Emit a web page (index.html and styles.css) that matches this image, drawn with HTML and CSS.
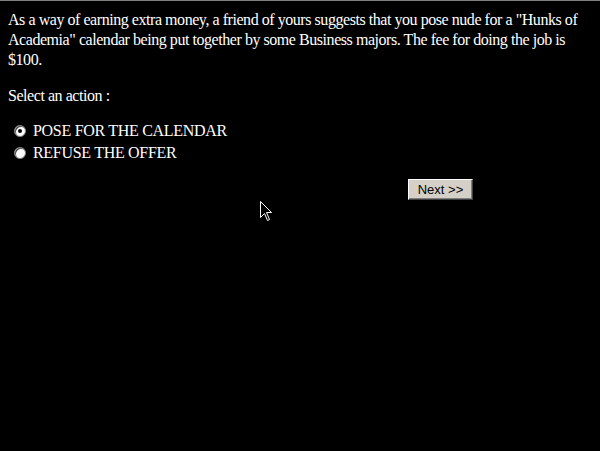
FILE: index.html
```html
<!DOCTYPE html>
<html>
<head>
<meta charset="utf-8">
<link rel="stylesheet" href="styles.css">
</head>
<body>
<div class="page">
  <p class="intro">As a way of earning extra money, a friend of yours suggests that you pose nude for a "Hunks of<br>Academia" calendar being put together by some Business majors. The fee for doing the job is<br>$100.</p>
  <p class="prompt">Select an action :</p>
  <form class="choices">
    <label class="choice"><input type="radio" name="act" class="radio" checked><span>POSE FOR THE CALENDAR</span></label>
    <label class="choice"><input type="radio" name="act" class="radio"><span>REFUSE THE OFFER</span></label>
    <div class="actions"><button type="button" class="next">Next &gt;&gt;</button></div>
  </form>
</div>
<svg class="cursor" width="12" height="20" viewBox="0 0 12 20"><path d="M0.5 0.5 L0.5 16.5 L4.5 12.5 L7.5 19.5 L9.5 18.5 L6.5 11.5 L11.5 11.5 Z" fill="#000" stroke="#fff" stroke-width="1"/></svg>
</body>
</html>
```
FILE: styles.css
```css
html, body {
  margin: 0;
  padding: 0;
  background: #000;
}
body {
  border-top: 1px solid #808080;
  height: 450px;
  overflow: hidden;
  position: relative;
}
.page {
  padding: 9px 8px 0 8px;
  color: #fff;
  font-family: "Liberation Serif", "Times New Roman", serif;
  font-size: 16px;
  line-height: 20px;
  letter-spacing: -0.45px;
  white-space: nowrap;
}
.intro {
  margin: 0;
}
.prompt {
  margin: 16px 0 0 0;
}
.choices {
  margin: 14px 0 0 0;
  display: flex;
  flex-direction: column;
}
.choice {
  display: flex;
  align-items: center;
  height: 22px;
  padding-left: 5px;
  letter-spacing: -0.3px;
}
.radio {
  appearance: none;
  -webkit-appearance: none;
  width: 12px;
  height: 12px;
  margin: 0 7px 0 1px;
  border-radius: 50%;
  background: #fff;
  border: 1px solid #808080;
  box-shadow: inset 1px 1px 0 #404040;
  position: relative;
}
.radio:checked::after {
  content: "";
  position: absolute;
  left: 3px;
  top: 3px;
  width: 4px;
  height: 4px;
  border-radius: 50%;
  background: #000;
}
.actions {
  display: flex;
  justify-content: flex-end;
  width: 465px;
  margin-top: 15px;
}
.next {
  width: 65px;
  height: 21px;
  padding: 0;
  background: #d4d0c8;
  color: #000;
  font-family: "Liberation Sans", Arial, sans-serif;
  font-size: 13px;
  letter-spacing: 0;
  border: 1px solid;
  border-color: #fff #404040 #404040 #fff;
  box-shadow: inset -1px -1px 0 #808080;
}
.cursor {
  position: absolute;
  left: 260px;
  top: 200px;
}
```
